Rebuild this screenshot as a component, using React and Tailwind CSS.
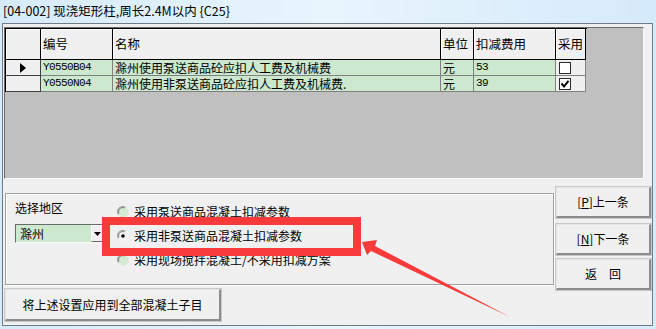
const cols = [35, 72, 328, 33, 82, 30];

function HeaderCell({ w, children }) {
  return (
    <div
      style={{ width: w }}
      className="h-[31px] shrink-0 bg-[#f0f0f0] border-r border-b border-black flex items-center pl-[2px] text-[12.5px] leading-none shadow-[inset_1px_1px_0_#ffffff]"
    >
      {children}
    </div>
  );
}

function Cell({ w, green, children, mono }) {
  return (
    <div
      style={{ width: w }}
      className={
        "h-[16px] shrink-0 border-r border-b border-[#808080] flex items-center pl-[2px] whitespace-nowrap overflow-hidden " +
        (green ? "bg-[#cce8cf] " : "bg-[#f0f0f0] ") +
        (mono ? "font-['Liberation_Mono',monospace] text-[11px] tracking-[-0.6px]" : "text-[12px]")
      }
    >
      {children}
    </div>
  );
}

function CheckBox({ checked }) {
  return (
    <div className="w-[12px] h-[12px] border border-[#2a2a2a] bg-white ml-[1px] flex items-center justify-center">
      {checked && (
        <svg width="10" height="10" viewBox="0 0 10 10">
          <polyline points="1.5,4.5 4,7.5 8.5,1.8" fill="none" stroke="#000" strokeWidth="2" />
        </svg>
      )}
    </div>
  );
}

function Radio({ checked, children }) {
  return (
    <div className="h-[24px] flex items-center gap-[5px] text-[12px] whitespace-nowrap">
      <svg width="12" height="12" viewBox="0 0 12 12" className="shrink-0">
        <circle cx="6" cy="6" r="5.5" fill={checked ? "#f4f4f4" : "#d3ebd3"} />
        <path d="M1.2 8.5 A5.3 5.3 0 0 1 8.5 1.2" fill="none" stroke="#9a9a9a" strokeWidth="1" />
        <path d="M1.9 7.5 A4.2 4.2 0 0 1 7.5 1.9" fill="none" stroke="#6a6a6a" strokeWidth="0.8" />
        {checked && <circle cx="6" cy="6" r="1.8" fill="#000" />}
      </svg>
      <span>{children}</span>
    </div>
  );
}

function Btn({ className, children }) {
  return (
    <div
      className={
        "bg-[#f0f0f0] border-t border-l border-[#e6e6e6] border-r-2 border-b-2 border-r-[#8c8c8c] border-b-[#8c8c8c] shadow-[0_0_0_1px_#c8c8c8] flex items-center justify-center text-[12px] " +
        (className || "")
      }
    >
      {children}
    </div>
  );
}

export default function App() {
  return (
    <div className="relative w-[656px] h-[329px] overflow-hidden bg-gradient-to-r from-[#d6ebf9] via-[#e8f5fd] to-[#d5eafa] font-['Noto_Sans_CJK_SC',sans-serif] text-black">
      <div className="h-[23px] pl-[3px] flex items-center text-[12.5px] leading-none whitespace-nowrap">
        [04-002] 现浇矩形柱,周长2.4M以内 {"{C25}"}
      </div>
      <div className="ml-[2px] w-[651px] h-[303px] border border-[#6f7c88] bg-[#f0f0f0] pt-[3px] px-[1px] flex flex-col">
        <div className="w-[640px] h-[152px] bg-[#c0c0c0] border-t border-l border-[#6a6a6a] border-r border-b border-r-[#fafafa] border-b-[#fafafa] overflow-hidden">
          <div className="w-[582px] border-t border-l border-black">
            <div className="flex">
              <HeaderCell w={cols[0]} />
              <HeaderCell w={cols[1]}>编号</HeaderCell>
              <HeaderCell w={cols[2]}>名称</HeaderCell>
              <HeaderCell w={cols[3]}>单位</HeaderCell>
              <HeaderCell w={cols[4]}>扣减费用</HeaderCell>
              <HeaderCell w={cols[5]}>采用</HeaderCell>
            </div>
            <div className="flex">
              <div style={{ width: cols[0] }} className="h-[16px] shrink-0 bg-[#f0f0f0] border-r border-b border-[#404040] flex items-center justify-center">
                <svg width="6" height="10" viewBox="0 0 6 10">
                  <polygon points="0,0 6,5 0,10" fill="#000" />
                </svg>
              </div>
              <Cell w={cols[1]} green mono>Y0550B04</Cell>
              <Cell w={cols[2]} green>滁州使用泵送商品砼应扣人工费及机械费</Cell>
              <Cell w={cols[3]} green>元</Cell>
              <Cell w={cols[4]} green mono>53</Cell>
              <Cell w={cols[5]}><CheckBox /></Cell>
            </div>
            <div className="flex">
              <div style={{ width: cols[0] }} className="h-[16px] shrink-0 bg-[#f0f0f0] border-r border-b border-[#404040]" />
              <Cell w={cols[1]} green mono>Y0550N04</Cell>
              <Cell w={cols[2]} green>滁州使用非泵送商品砼应扣人工费及机械费.</Cell>
              <Cell w={cols[3]} green>元</Cell>
              <Cell w={cols[4]} green mono>39</Cell>
              <Cell w={cols[5]}><CheckBox checked /></Cell>
            </div>
          </div>
        </div>

        <div className="flex mt-[8px]">
          <div className="flex flex-col pt-[6px] pl-[1px]">
            <div className="w-[549px] h-[92px] border border-[#a0a0a0] shadow-[inset_1px_1px_0_#ffffff,1px_1px_0_#ffffff] flex">
              <div className="pl-[9px] pt-[6px] w-[100px] flex flex-col">
                <div className="h-[16px] leading-[16px] text-[12px]">选择地区</div>
                <div className="mt-[8px] w-[90px] h-[19px] bg-[#cce8cf] border border-t-[#6a6a6a] border-l-[#6a6a6a] border-r-[#f8f8f8] border-b-[#f8f8f8] flex items-stretch">
                  <div className="flex-1 pl-[4px] text-[12px] leading-[17px]">滁州</div>
                  <div className="w-[13px] bg-[#f0f0f0] border-t border-l border-white border-r border-b border-r-[#6a6a6a] border-b-[#6a6a6a] flex items-center justify-center">
                    <svg width="7" height="4" viewBox="0 0 7 4">
                      <polygon points="0,0 7,0 3.5,4" fill="#000" />
                    </svg>
                  </div>
                </div>
              </div>
              <div className="ml-[11px] pt-[6px] flex flex-col">
                <Radio>采用泵送商品混凝土扣减参数</Radio>
                <Radio checked>采用非泵送商品混凝土扣减参数</Radio>
                <Radio>采用现场搅拌混凝土/不采用扣减方案</Radio>
              </div>
            </div>
            <Btn className="mt-[4px] w-[216px] h-[32px]">将上述设置应用到全部混凝土子目</Btn>
          </div>
          <div className="ml-auto w-[95px] flex flex-col">
            <Btn className="h-[31px]">
              <span>[<span className="underline">P</span>]上一条</span>
            </Btn>
            <Btn className="h-[31px] mt-[6px]">
              <span>[<span className="underline">N</span>]下一条</span>
            </Btn>
            <Btn className="h-[31px] mt-[4px]">返　回</Btn>
          </div>
        </div>
      </div>

      <svg className="absolute left-0 top-0 pointer-events-none" width="656" height="329" viewBox="0 0 656 329">
        <rect x="106" y="221" width="251" height="31" fill="none" stroke="#f93a3a" strokeWidth="8" />
        <polygon points="362,242 377,240 375,246 510,317 371,251 367,255" fill="#f93a3a" />
      </svg>
    </div>
  );
}
